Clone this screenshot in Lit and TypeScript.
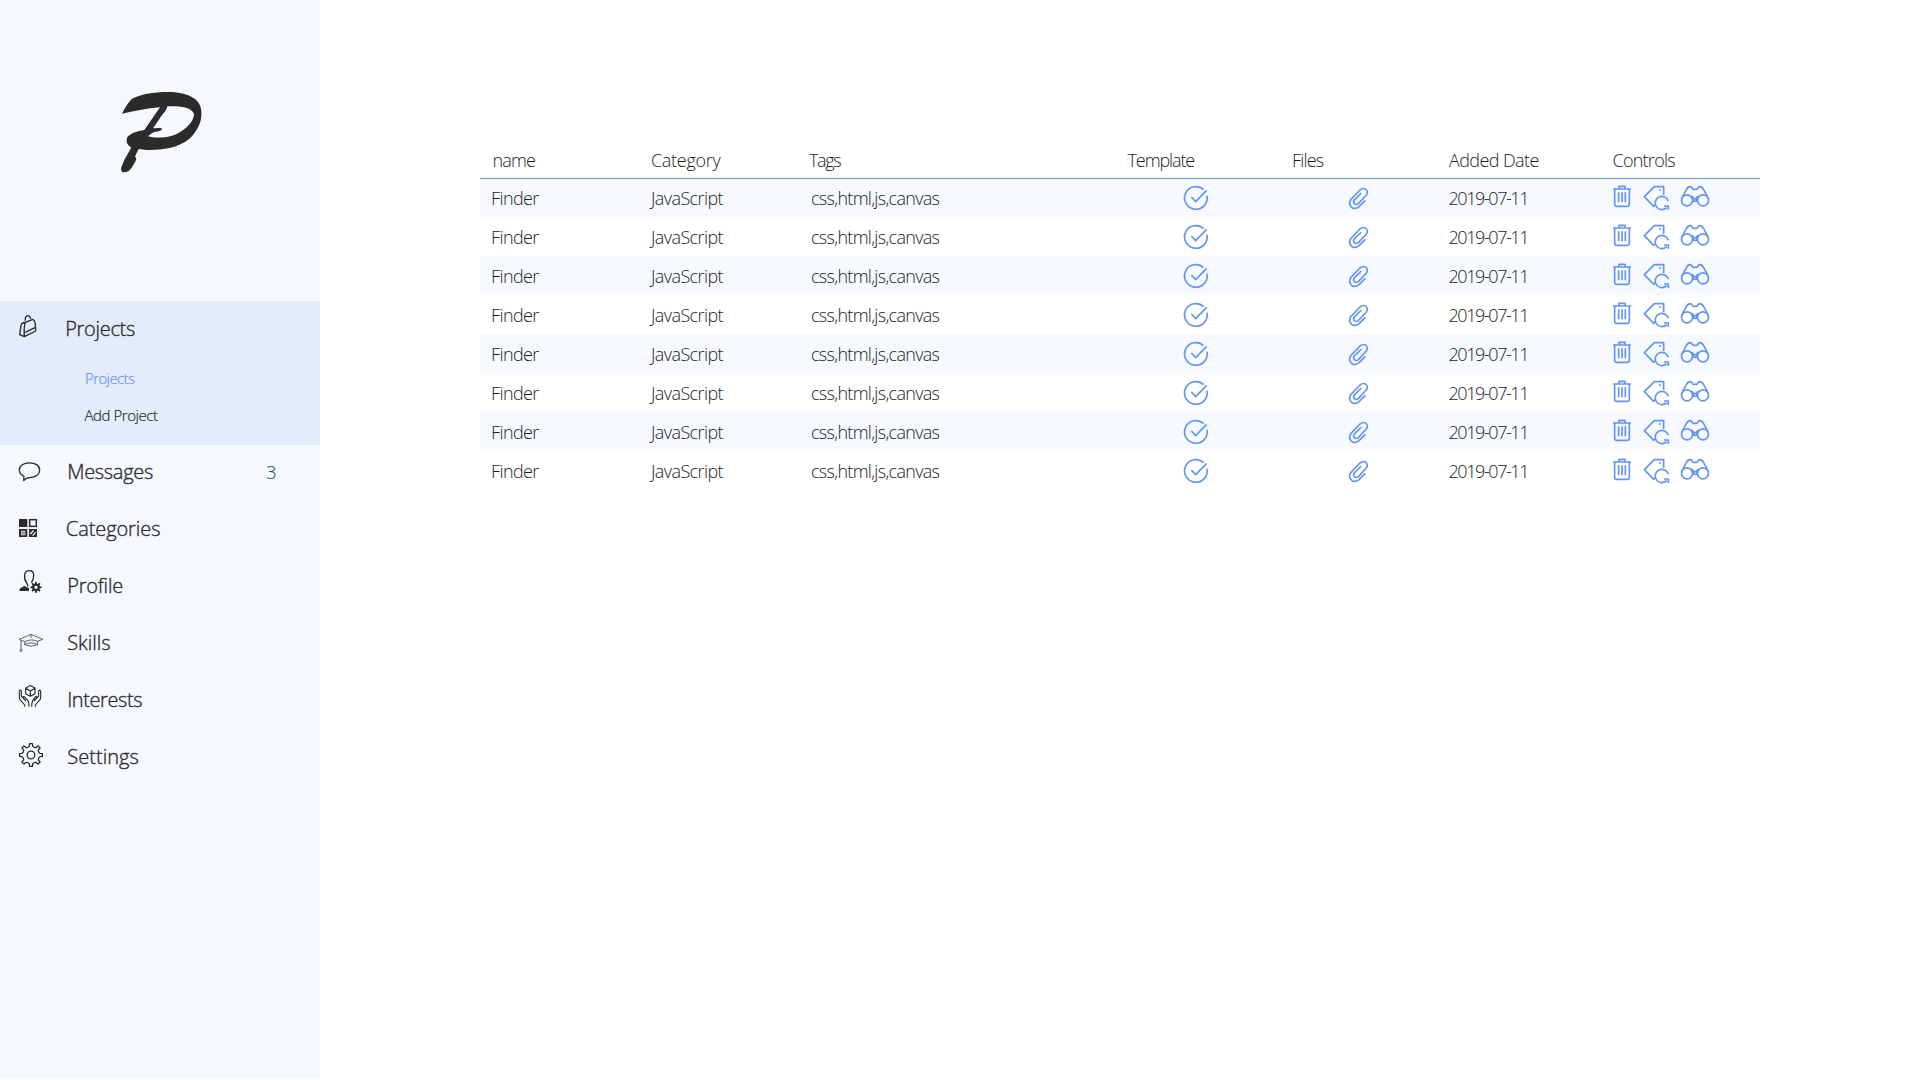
import { LitElement, html, svg, css, nothing } from "lit";
import { customElement, property } from "lit/decorators.js";
import { styleMap } from "lit/directives/style-map.js";

/** Outline of a cog with rounded-off trapezoid teeth. */
function cog(cx: number, cy: number, outer: number, inner: number, teeth: number): string {
  const step = (Math.PI * 2) / teeth;
  const pt = (r: number, a: number) =>
    `${(cx + r * Math.sin(a)).toFixed(1)} ${(cy - r * Math.cos(a)).toFixed(1)}`;
  let d = "";
  for (let i = 0; i < teeth; i++) {
    const a = i * step;
    d += `${i ? "L" : "M"}${pt(outer, a - step * 0.16)}L${pt(outer, a + step * 0.16)}`;
    d += `L${pt(inner + 1, a + step * 0.24)}Q${pt(inner - 3, a + step * 0.5)} ${pt(inner + 1, a + step * 0.76)}`;
  }
  return d + "Z";
}

/* Menu glyphs are drawn at three units per pixel in a 30x57 px slot. */
const menuIcons: Record<string, { top: number; art: unknown }> = {
  bag: {
    top: 3,
    art: svg`<g class="line">
      <path d="M76 62V54Q78 46 85 47Q91 49 92 57"/>
      <path d="M75 68L98 58Q104 60 106 73L107 93L73 110L59 104L63 76Q65 68 75 67Q71 86 73 109"/>
      <path d="M76 97L106 82"/></g>`,
  },
  chat: {
    top: -15,
    art: svg`<path class="line" d="M72 79L71 92Q77 84 90 83C108 82 119 72 119 60C119 46 105 38.500 88 38.500C71 38.500 58 47 58 60C58 69 64 75 72 79Z"/>`,
  },
  tiles: {
    top: 156,
    art: svg`<rect class="solid" x="57" y="207" width="25" height="24"/>
      <rect class="line thick" x="89" y="209" width="20" height="20"/>
      <rect class="solid" x="57" y="237" width="25" height="24"/>
      <rect class="solid" x="87" y="237" width="24" height="24"/>
      <rect class="pale" x="63" y="242" width="13" height="14"/>
      <path class="line faint" d="M63 249H76M67.500 242V256M72 242V256"/>
      <path class="cut" d="M91 252L101 241M98 257L107 247"/>`,
  },
  person: {
    top: 327,
    art: svg`<path class="line" d="M83 410Q84 404 80 399C75 393 73 386 74 375C75 365 80 362 88 362C97 362 101 366 101 376C101 386 98 393 94 398"/>
      <path class="solid" d="M58 423Q58 414 67 412L73 407L80 412L87 414V423Z"/>
      <path class="solid" fill-rule="evenodd" d="${cog(108, 412, 17, 12.5, 8)}M108 407a5 5 0 1 0 .1 0Z"/>`,
  },
  cap: {
    top: 18,
    art: svg`<g class="line thin"><path d="M58 88L93 73L128 88L113 94Q93 85 74 95Z"/>
      <path d="M74 95V104Q93 113 113 104V94M74 103Q93 94 113 103M63 90V116M93 73V84"/>
      <circle cx="63" cy="121" r="3.500"/></g>`,
  },
  hands: {
    top: 189,
    art: svg`<g class="line fine"><path d="M91 226.500L105 234V251L91 259L77 251V234ZM77 235L91 243L105 235M91 243V258"/>
      <path d="M74 290V285L60 269Q58 266 58 261V243Q61 238 64 243V258L78 273M71 266Q67 259 73 260L84 272Q87 277 87 290"/>
      <path d="M106 290V285L120 269Q122 266 122 261V243Q119 238 116 243V258L102 273M109 266Q113 259 107 260L98 272Q95 277 95 290"/></g>`,
  },
  gear: {
    top: 360,
    art: svg`<path class="line" d="${cog(93, 435, 34.5, 26, 8)}"/><circle class="line" cx="93" cy="435" r="11.500"/>`,
  },
};

@customElement("menu-item")
class MenuItem extends LitElement {
  @property() icon = "";
  @property() label = "";
  @property() count = "";
  @property({ type: Number }) tracking = -0.3;
  static styles = css`
    :host { display: flex; height: 57px; padding-left: 16px; color: #2b2b2b; }
    svg { width: 30px; height: 57px; flex: none; }
    .line { fill: none; stroke: #2b2b2b; stroke-width: 4; stroke-linejoin: round; }
    .thick { stroke-width: 4.5; stroke-linejoin: miter; }
    .fine { stroke-width: 3.4; }
    .thin { stroke: #555; stroke-width: 2.8; }
    .faint { stroke: #555; stroke-width: 1.5; }
    .solid { fill: #2b2b2b; }
    .pale { fill: #d5d8df; }
    .cut { fill: none; stroke: #f5f8ff; stroke-width: 4; }
    .label { margin-left: 21.2px; font-size: 20px; -webkit-text-stroke: 0.35px; line-height: 54px; white-space: nowrap; }
    .label.left { margin-left: 19.2px; line-height: 55px; }
    .label.mid { margin-left: 19.8px; }
    .count { margin-left: auto; margin-right: 43.5px; line-height: 55px; font-size: 18px; color: #1f6659; -webkit-text-stroke: 0.2px; }
  `;
  render() {
    const { top, art } = menuIcons[this.icon];
    const shift = this.icon === "bag" ? "left" : this.icon === "tiles" ? "mid" : "";
    return html`<svg viewBox="48 ${top} 90 171">${art}</svg>
      <span class="label ${shift}" style=${styleMap({ letterSpacing: `${this.tracking}px` })}>${this.label}</span>
      ${this.count ? html`<span class="count">${this.count}</span>` : nothing}`;
  }
}

@customElement("side-bar")
class SideBar extends LitElement {
  static styles = css`
    :host { display: block; width: 320px; height: 1079px; background: #f5f8ff; flex: none; }
    .brand { height: 301px; box-sizing: border-box; padding: 70px 0 0 100px; }
    .brand svg { display: block; width: 130px; height: 120px; fill: #2b2b2b; }
    .group { height: 144px; background: #e4ebfa; }
    .sub { display: block; padding-left: 84.5px; height: 37px; line-height: 37px; font-size: 15px; letter-spacing: -0.45px; color: #222; -webkit-text-stroke: 0.15px; }
    .sub.on { color: #6495ed; padding-left: 85px; letter-spacing: -0.6px; }
    .subs { padding-top: 2px; }
  `;
  render() {
    return html`
      <div class="brand"><svg viewBox="0 0 390 360"><path fill-rule="evenodd" d="M66 131C72 118 82 102 94 88C120 72 160 66 205 66C260 66 301 85 304 122C307 150 296 178 270 205C235 236 180 241 140 240L116 237Q110 248 105 260L109 265C108 275 102 281 97 290C90 301 82 307 72 307C62 306 61 297 67 284C74 265 86 250 94 232C80 226 77 212 82 202C92 188 112 184 133 180L180 112C140 115 100 124 66 131ZM202 109C200 122 192 128 184 138C176 150 168 162 160 173C164 177 178 172 186 176C186 181 178 184 166 185C156 188 150 193 144 199C165 205 200 204 225 194C262 178 282 152 282 132C276 112 240 108 202 109Z"/></svg></div>
      <div class="group">
        <menu-item icon="bag" label="Projects"></menu-item>
        <div class="subs"><span class="sub on">Projects</span><span class="sub">Add Project</span></div>
      </div>
      <menu-item icon="chat" label="Messages" count="3"></menu-item>
      <menu-item icon="tiles" label="Categories" tracking="-0.08"></menu-item>
      <menu-item icon="person" label="Profile" tracking="-0.2"></menu-item>
      <menu-item icon="cap" label="Skills" tracking="0"></menu-item>
      <menu-item icon="hands" label="Interests" tracking="-0.4"></menu-item>
      <menu-item icon="gear" label="Settings" tracking="0.05"></menu-item>`;
  }
}

const rows = Array.from({ length: 8 }, () => ({
  name: "Finder",
  category: "JavaScript",
  tags: "css,html,js,canvas",
  date: "2019-07-11",
}));

@customElement("project-table")
class ProjectTable extends LitElement {
  static styles = css`
    :host { display: block; width: 1280px; color: #1c1c1c; font-size: 18px; letter-spacing: -0.6px; white-space: nowrap; }
    .row { display: grid; grid-template-columns: 160px 160px 320px 160px 160px 160px 160px; height: 39px; line-height: 41px; }
    .row > * { padding-left: 11px; }
    .row > .tags { padding-left: 11px; letter-spacing: -0.7px; }
    .row > .date { padding-left: 8.5px; letter-spacing: -1.42px; }
    .head { line-height: 42px; }
    .head > :nth-child(1) { padding-left: 12.5px; letter-spacing: -0.85px; }
    .head > :nth-child(2) { letter-spacing: -0.3px; }
    .head > :nth-child(3) { padding-left: 9px; letter-spacing: -1.4px; }
    .head > :nth-child(4) { padding-left: 7.500px; letter-spacing: -1.1px; }
    .head > :nth-child(5) { padding-left: 12px; letter-spacing: -0.8px; }
    .head > :nth-child(6) { padding-left: 9px; }
    .head > :nth-child(7) { padding-left: 12.5px; letter-spacing: -0.75px; }
    .body:nth-child(even) { background: #f6faff; }
    .body.first { box-shadow: inset 0 1px #6495ed; }
    .row > .pic { padding: 0; display: block; width: 160px; height: 39px; fill: none; stroke: #6495ed; stroke-width: 5; stroke-linejoin: round; }
    .dot { fill: #6495ed; stroke: none; }
  `;
  render() {
    return html`
      <div class="row head">
        <span>name</span><span>Category</span><span>Tags</span><span>Template</span><span>Files</span><span>Added Date</span><span>Controls</span>
      </div>
      ${rows.map(
        (r, i) => html`<div class="row body ${i === 0 ? "first" : ""}">
          <span>${r.name}</span><span>${r.category}</span><span class="tags">${r.tags}</span>
          <svg class="pic" viewBox="-150 6 480 117"><path d="M101 41A34 34 0 1 0 111 59M64 63L77 77L110 43"/></svg>
          <svg class="pic" viewBox="330 6 480 117"><path d="M586 73L567 92Q556 101 546 95Q533 84 543 70L570 42Q578 35 587 39Q596 47 589 57L565 83Q558 88 553 83Q548 77 554 71L574 51"/></svg>
          <span class="date">${r.date}</span>
          <svg class="pic" viewBox="0 6 480 117">
            <path d="M39 39H93M57 38V31H75V38M44 40V85Q44 91 50 91H82Q88 91 88 85V40M56 49V79M66 49V79M76 49V79"/>
            <path d="M191 57V32H163L133 62L161 91L165 86M205 76A20 20 0 1 0 200 95M192 90H205V102"/>
            <circle class="dot" cx="180" cy="42" r="3"/>
            <circle cx="261" cy="73" r="16.500"/><circle cx="309" cy="73" r="16.500"/><circle cx="285" cy="72" r="4.500"/>
            <path d="M246 66Q251 55 259 41Q264 31 273 32L279 40H291L297 32Q306 31 311 41Q319 55 324 66M275 60L282 68M295 60L288 68M277 76L282 74M293 76L288 74"/>
          </svg>
        </div>`,
      )}`;
  }
}

@customElement("app-root")
class AppRoot extends LitElement {
  static styles = css`
    :host { display: flex; width: 1920px; height: 1080px; overflow: hidden; background: #fff; font-family: "Open Sans", "Noto Sans", sans-serif; font-weight: 300; }
    main { padding: 139px 0 0 160px; }
  `;
  render() {
    return html`<side-bar></side-bar><main><project-table></project-table></main>`;
  }
}
